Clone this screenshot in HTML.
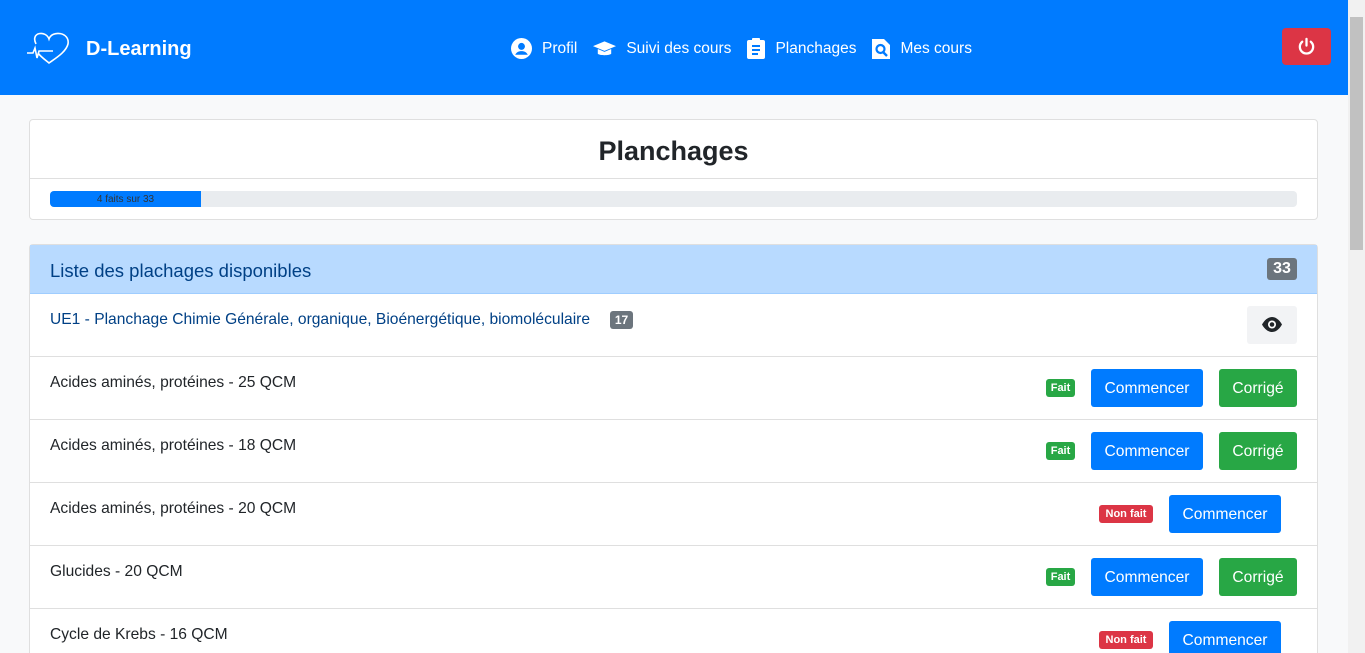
<!DOCTYPE html>
<html style="overflow:hidden"><head><meta charset="utf-8"><style>
*{box-sizing:border-box;margin:0;padding:0}
html,body{width:1365px;height:653px;overflow:hidden}
body{background:#f8f9fa;font-family:"Liberation Sans",sans-serif;color:#212529;position:relative}
.nav{position:absolute;left:0;top:0;width:1348px;height:95px;background:#007bff;color:#fff}
.brand{position:absolute;left:86px;top:38px;font-size:20px;font-weight:bold}
.links{position:absolute;left:511px;top:38px;font-size:15.5px;display:flex;align-items:center}
.links span{display:flex;align-items:center;margin-right:16px}
.links svg{margin-right:10px}
.pw{position:absolute;left:1282px;top:28px;width:49px;height:37px;background:#dc3545;border-radius:4px}
.sb{position:absolute;left:1348px;top:0;width:17px;height:653px;background:#f1f1f1}
.sb i{position:absolute;left:2px;top:17px;width:13px;height:233px;background:#c1c1c1}
.card{position:absolute;left:29px;width:1289px;background:#fff;border:1px solid #dfdfdf;border-radius:4px}
.t{height:59px;border-bottom:1px solid #dfdfdf;text-align:center;font-size:27px;font-weight:bold;line-height:62px}
.prog{position:absolute;left:20px;top:71px;width:1247px;height:16px;background:#e9ecef;border-radius:4px;overflow:hidden}
.prog div{width:151px;height:16px;background:#007bff;font-size:10px;text-align:center;line-height:18px;color:#333}
.h{height:49px;background:#b8daff;color:#004085;font-size:18.5px;padding-left:20px;line-height:51px;position:relative;border-bottom:1px solid #9fcdff}
.badge{position:absolute;border-radius:3px;color:#fff;font-weight:bold;text-align:center}
.row{height:63px;border-bottom:1px solid #dfdfdf;position:relative;font-size:15.6px;padding:17px 20px}
.btn{position:absolute;top:12px;height:38px;border-radius:3px;color:#fff;font-size:15.6px;text-align:center;line-height:40px}
.bl{background:#007bff;width:112px}.gr{background:#28a745;width:78px;left:1189px}
.f{background:#28a745;font-size:11px;width:29px;height:18px;line-height:19px;top:22px;left:1016px}
.nf{background:#dc3545;font-size:11px;width:54px;height:18px;line-height:19px;top:22px;left:1069px}
</style></head><body>
<div class="nav">
<svg style="position:absolute;left:26px;top:30px" width="46" height="34" viewBox="0 0 46 34" fill="none" stroke="#fff" stroke-width="1.6"><path d="M10 14 C4 2 20 0 23 9 C26 0 44 2 42 14 C40 22 30 28 23 33 C18 29 14 26 12 23"/><path d="M1 23 H7 L9 18 L11 28 L13 21 H27"/></svg>
<div class="brand">D-Learning</div>
<div class="links">
<span><svg width="21" height="21" viewBox="0 0 20 20"><circle cx="10" cy="10" r="10" fill="#fff"/><circle cx="10" cy="8" r="3.3" fill="#007bff"/><path d="M4 16c1.5-3 4-3.5 6-3.5s4.5.5 6 3.5" fill="#007bff"/></svg>Profil</span>
<span><svg width="23" height="18" viewBox="0 0 24 18" fill="#fff"><path d="M12 1 24 6 12 11 0 6z"/><path d="M5 9v5c2 2 12 2 14 0V9l-7 3z"/></svg>Suivi des cours</span>
<span><svg width="18" height="21" viewBox="0 0 18 21"><rect x="0" y="2" width="18" height="19" rx="2" fill="#fff"/><rect x="5" y="0" width="8" height="4" rx="1" fill="#fff"/><path d="M5 8h8M5 12h8M5 16h6" stroke="#007bff" stroke-width="2"/></svg>Planchages</span>
<span><svg width="18" height="21" viewBox="0 0 18 21"><path d="M0 1h12l6 6v14H0z" fill="#fff"/><circle cx="8.5" cy="11" r="4" fill="none" stroke="#007bff" stroke-width="2.2"/><path d="M11 14l4 4" stroke="#007bff" stroke-width="2.4"/></svg>Mes cours</span>
</div>
<div class="pw"><svg style="position:absolute;left:15px;top:9px" width="19" height="19" viewBox="0 0 20 20" fill="none" stroke="#fff" stroke-width="2.4" stroke-linecap="round"><path d="M10 2v7"/><path d="M5.5 5a7 7 0 1 0 9 0"/></svg></div>
</div>
<div class="sb"><i></i></div>
<div class="card" style="top:119px;height:101px">
<div class="t">Planchages</div>
<div class="prog"><div>4 faits sur 33</div></div>
</div>
<div class="card" style="top:244px;height:409px;border-bottom:none;border-radius:4px 4px 0 0">
<div class="h">Liste des plachages disponibles<span class="badge" style="background:#6c757d;left:1237px;top:13px;width:30px;height:22px;line-height:22px;font-size:16px">33</span></div>
<div class="row" style="color:#004085">UE1 - Planchage Chimie Générale, organique, Bioénergétique, biomoléculaire<span class="badge" style="background:#6c757d;left:580px;top:17px;width:23px;height:18px;line-height:18px;font-size:12px">17</span>
<div class="btn" style="left:1217px;width:50px;background:#f2f3f5"><svg style="margin-top:11px" width="22" height="15" viewBox="0 0 22 15"><path d="M1 7.5C4 2 8 0 11 0s7 2 10 7.5C18 13 14 15 11 15S4 13 1 7.5z" fill="#212529"/><circle cx="11" cy="7.5" r="4" fill="#fff"/><circle cx="11" cy="7.5" r="2.3" fill="#212529"/></svg></div></div>
<div class="row">Acides aminés, protéines - 25 QCM<span class="badge f">Fait</span><div class="btn bl" style="left:1061px">Commencer</div><div class="btn gr">Corrigé</div></div>
<div class="row">Acides aminés, protéines - 18 QCM<span class="badge f">Fait</span><div class="btn bl" style="left:1061px">Commencer</div><div class="btn gr">Corrigé</div></div>
<div class="row">Acides aminés, protéines - 20 QCM<span class="badge nf">Non fait</span><div class="btn bl" style="left:1139px">Commencer</div></div>
<div class="row">Glucides - 20 QCM<span class="badge f">Fait</span><div class="btn bl" style="left:1061px">Commencer</div><div class="btn gr">Corrigé</div></div>
<div class="row">Cycle de Krebs - 16 QCM<span class="badge nf">Non fait</span><div class="btn bl" style="left:1139px">Commencer</div></div>
</div>
</body></html>
